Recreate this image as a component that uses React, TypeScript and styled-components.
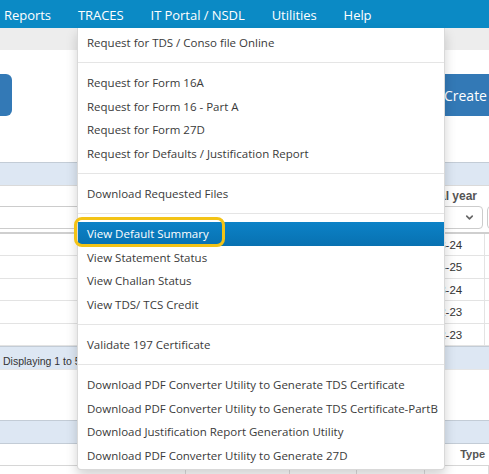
import React from 'react';
import styled, { createGlobalStyle } from 'styled-components';
import { ChevronDown } from 'lucide-react';

const GlobalStyle = createGlobalStyle`
  html, body {
    margin: 0;
    padding: 0;
    background: #ffffff;
    overflow: hidden;
  }
  body {
    width: 489px;
    height: 474px;
    font-family: 'Open Sans', 'Liberation Sans', sans-serif;
  }
`;

const navItems = ['Reports', 'TRACES', 'IT Portal / NSDL', 'Utilities', 'Help'];

const menuGroups: string[][] = [
  ['Request for TDS / Conso file Online'],
  [
    'Request for Form 16A',
    'Request for Form 16 - Part A',
    'Request for Form 27D',
    'Request for Defaults / Justification Report'
  ],
  ['Download Requested Files'],
  [
    'View Default Summary',
    'View Statement Status',
    'View Challan Status',
    'View TDS/ TCS Credit'
  ],
  ['Validate 197 Certificate'],
  [
    'Download PDF Converter Utility to Generate TDS Certificate',
    'Download PDF Converter Utility to Generate TDS Certificate-PartB',
    'Download Justification Report Generation Utility',
    'Download PDF Converter Utility to Generate 27D'
  ]
];

const ACTIVE_ITEM = 'View Default Summary';

const years = ['2023-24', '2024-25', '2023-24', '2022-23', '2022-23'];

export const App = () => {
  return (
    <Page>
      <GlobalStyle />
      <NavBar>
        { navItems.map((item) => (
          <NavItem key={ item }>{ item }</NavItem>
        )) }
      </NavBar>
      <SubBar />

      <Toolbar>
        <ActionButton $edge="left" />
        <ActionButton $edge="right">Create</ActionButton>
      </Toolbar>

      <PanelHeader />
      <FilterRow>
        <FieldGroup $bleed>
          <FieldLabel />
          <SelectBox />
        </FieldGroup>
        <FieldGroup>
          <FieldLabel>Financial year</FieldLabel>
          <SelectBox>
            <ChevronDown size={ 11 } strokeWidth={ 3.5 } color="#666" />
          </SelectBox>
        </FieldGroup>
        <FieldGroup>
          <FieldLabel />
          <SelectBox />
        </FieldGroup>
      </FilterRow>

      <Table>
        { years.map((year, i) => (
          <Row key={ i }>
            <Cell />
            <Cell $bordered>{ year }</Cell>
            <Cell />
          </Row>
        )) }
      </Table>
      <PanelFooter>Displaying 1 to 5 of 5 items</PanelFooter>

      <Spacer />

      <PanelHeader />
      <DetailHeader>
        <HeadCell />
        <HeadCell />
        <HeadCell />
        <HeadCell />
        <HeadCell $right>Type</HeadCell>
      </DetailHeader>
      <DetailRow>
        <DataCell>33</DataCell>
        <DataCell>33</DataCell>
        <DataCell>33</DataCell>
        <DataCell>33</DataCell>
        <DataCell />
      </DetailRow>

      <Dropdown>
        { menuGroups.map((group, gi) => (
          <React.Fragment key={ gi }>
            { gi > 0 && <Divider /> }
            { group.map((item) => (
              <MenuItem key={ item } $active={ item === ACTIVE_ITEM }>
                { item }
                { item === ACTIVE_ITEM && <Callout /> }
              </MenuItem>
            )) }
          </React.Fragment>
        )) }
      </Dropdown>
    </Page>
  );
};

export default App;

const Page = styled.div`
  position: relative;
  width: 489px;
  height: 474px;
  overflow: hidden;
`;

const NavBar = styled.nav`
  display: flex;
  align-items: center;
  gap: 27px;
  height: 28px;
  padding: 0 0 0 4px;
  background-color: #0b8ac5;
`;

const NavItem = styled.span`
  color: #ffffff;
  font-size: 13px;
  letter-spacing: -0.05px;
  line-height: 28px;
  padding-top: 2px;
  white-space: nowrap;
`;

const SubBar = styled.div`
  height: 22px;
  background-color: #ededed;
`;

const Toolbar = styled.div`
  display: flex;
  justify-content: space-between;
  align-items: flex-start;
  height: 112px;
  padding-top: 24px;
  box-sizing: border-box;
`;

const ActionButton = styled.div<{ $edge: 'left' | 'right' }>`
  display: flex;
  align-items: center;
  height: 42px;
  padding: 0 12px;
  border-radius: 6px;
  background-color: #3379b6;
  color: #ffffff;
  font-size: 14px;
  width: ${ (p) => (p.$edge === 'left' ? '40px' : 'auto') };
  margin-left: ${ (p) => (p.$edge === 'left' ? '-52px' : '0') };
  margin-right: ${ (p) => (p.$edge === 'right' ? '-10px' : '0') };
`;

const PanelHeader = styled.div`
  height: 22px;
  border-top: 1px solid #c3ccd6;
  background-color: #dde7f3;
`;

const FilterRow = styled.div`
  display: grid;
  grid-template-columns: 391px 88px 1fr;
  gap: 4px;
  height: 47px;
  padding-top: 3px;
  box-sizing: border-box;
  border-top: 1px solid #dadada;
`;

const FieldGroup = styled.div<{ $bleed?: boolean }>`
  display: flex;
  flex-direction: column;
  gap: 3px;
  min-width: 0;
  margin-left: ${ (p) => (p.$bleed ? '-6px' : '0') };
`;

const FieldLabel = styled.label`
  font-family: 'Liberation Sans', Arial, sans-serif;
  font-size: 12px;
  font-weight: 700;
  color: #555555;
  line-height: 14px;
  height: 14px;
  padding-left: 2px;
  white-space: nowrap;
`;

const SelectBox = styled.div`
  display: flex;
  align-items: center;
  justify-content: flex-end;
  height: 23px;
  padding-right: 7px;
  border: 1px solid #cccccc;
  border-radius: 4px;
  box-sizing: border-box;
  background: #ffffff;
`;

const Table = styled.div`
  border-top: 2px solid #cfcfcf;
`;

const Row = styled.div`
  display: grid;
  grid-template-columns: 413px 72px 1fr;
  height: 22.4px;
  border-bottom: 1px solid #e3e3e3;
  box-sizing: border-box;
`;

const Cell = styled.div<{ $bordered?: boolean }>`
  font-family: 'Liberation Sans', Arial, sans-serif;
  font-size: 11.5px;
  color: #333333;
  line-height: 22px;
  padding-left: 7px;
  border-right: ${ (p) => (p.$bordered ? '1px solid #e3e3e3' : 'none') };
`;

const PanelFooter = styled.div`
  height: 23px;
  padding: 8px 0 0 3px;
  box-sizing: border-box;
  border-top: 1px solid #c3ccd6;
  background-color: #dde7f3;
  font-family: 'Liberation Sans', Arial, sans-serif;
  font-size: 10.5px;
  color: #333333;
  line-height: 13px;
  white-space: nowrap;
`;

const Spacer = styled.div`
  height: 50px;
  border-top: 1px solid #e6e6e6;
`;

const DetailHeader = styled.div`
  display: grid;
  grid-template-columns: 186px 104px 67px 68px 1fr;
  height: 21px;
  border-top: 1px solid #c3ccd6;
  border-bottom: 1px solid #d6d6d6;
`;

const HeadCell = styled.div<{ $right?: boolean }>`
  font-family: 'Liberation Sans', Arial, sans-serif;
  font-size: 11px;
  font-weight: 700;
  color: #555555;
  line-height: 21px;
  text-align: ${ (p) => (p.$right ? 'right' : 'left') };
  padding-right: 4px;
`;

const DetailRow = styled(DetailHeader)`
  border-top: none;
  border-bottom: none;
  height: 22px;
`;

const DataCell = styled.div`
  font-family: 'Liberation Sans', Arial, sans-serif;
  font-size: 11px;
  color: #333333;
  line-height: 22px;
  padding: 6px 8px 0 0;
  text-align: right;
  border-right: 1px solid #dddddd;
`;

const Dropdown = styled.ul`
  position: absolute;
  top: 28px;
  left: 77px;
  width: 368px;
  margin: 0;
  padding: 3px 0 2px;
  list-style: none;
  box-sizing: border-box;
  background-color: #ffffff;
  border: 1px solid rgba(0, 0, 0, 0.15);
  border-top: none;
  border-radius: 0 0 4px 4px;
  box-shadow: 0 6px 12px rgba(0, 0, 0, 0.175);
`;

const MenuItem = styled.li<{ $active?: boolean }>`
  position: relative;
  padding: 3px 9px;
  font-size: 11.5px;
  line-height: 17.4px;
  white-space: nowrap;
  color: ${ (p) => (p.$active ? '#ffffff' : '#3a3a3a') };
  background: ${ (p) => (p.$active ? 'linear-gradient(#0c82c7, #0871b1)' : 'transparent') };
`;

const Divider = styled.li`
  height: 1px;
  margin: 8px 0;
  background-color: #e5e5e5;
`;

const Callout = styled.span`
  position: absolute;
  top: -5px;
  left: -4px;
  width: 151px;
  height: 30px;
  box-sizing: border-box;
  border: 3px solid #f3c316;
  border-radius: 8px;
`;
